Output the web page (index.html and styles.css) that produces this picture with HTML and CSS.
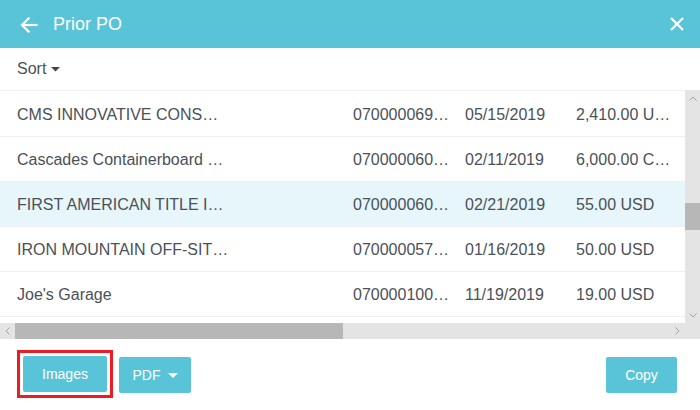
FILE: index.html
```
<!DOCTYPE html>
<html lang="en">
<head>
<meta charset="utf-8">
<title>Prior PO</title>
<link rel="stylesheet" href="styles.css">
</head>
<body>
<div class="app">
  <header class="topbar">
    <svg class="icon-back" width="18" height="16" viewBox="0 0 18 16" aria-hidden="true">
      <path d="M2 8H17.5" fill="none" stroke="#fff" stroke-width="2.2"/>
      <path d="M8.6 1.4L2 8l6.6 6.6" fill="none" stroke="#fff" stroke-width="2.2" stroke-linecap="square"/>
    </svg>
    <h1 class="title">Prior PO</h1>
    <svg class="icon-close" width="14" height="14" viewBox="0 0 14 14" aria-hidden="true">
      <path d="M1 1L13 13M13 1L1 13" fill="none" stroke="#fff" stroke-width="2.2"/>
    </svg>
  </header>

  <div class="sortbar">
    <span class="sort-label">Sort</span>
    <svg class="sort-caret" width="9" height="5" viewBox="0 0 9 5" aria-hidden="true"><path d="M0 0h9L4.5 4.5z" fill="#3f464c"/></svg>
  </div>

  <div class="scroller">
    <div class="list">
      <div class="row"><span>CMS INNOVATIVE CONS…</span><span>070000069…</span><span>05/15/2019</span><span>2,410.00 U…</span></div>
      <div class="row"><span>Cascades Containerboard …</span><span>070000060…</span><span>02/11/2019</span><span>6,000.00 C…</span></div>
      <div class="row is-selected"><span>FIRST AMERICAN TITLE I…</span><span>070000060…</span><span>02/21/2019</span><span>55.00 USD</span></div>
      <div class="row"><span>IRON MOUNTAIN OFF-SIT…</span><span>070000057…</span><span>01/16/2019</span><span>50.00 USD</span></div>
      <div class="row"><span>Joe's Garage</span><span>070000100…</span><span>11/19/2019</span><span>19.00 USD</span></div>
    </div>

    <div class="vbar">
      <div class="sb-btn"><svg width="8" height="5" viewBox="0 0 8 5"><path d="M0.5 4.5L4 1l3.5 3.5" fill="none" stroke="#a2a2a2" stroke-width="1"/></svg></div>
      <div class="vtrack"><div class="vthumb"></div></div>
      <div class="sb-btn"><svg width="8" height="5" viewBox="0 0 8 5"><path d="M0.5 0.5L4 4l3.5-3.5" fill="none" stroke="#a2a2a2" stroke-width="1"/></svg></div>
    </div>

    <div class="hbar">
      <div class="sb-btn"><svg width="5" height="8" viewBox="0 0 5 8"><path d="M4.5 0.5L1 4l3.5 3.5" fill="none" stroke="#a2a2a2" stroke-width="1"/></svg></div>
      <div class="hthumb"></div>
      <div class="htrack"></div>
      <div class="sb-btn"><svg width="5" height="8" viewBox="0 0 5 8"><path d="M0.5 0.5L4 4 0.5 7.5" fill="none" stroke="#a2a2a2" stroke-width="1"/></svg></div>
    </div>

    <div class="corner"></div>
  </div>

  <footer class="actions">
    <span class="focus-ring"><button class="btn btn-images">Images</button></span>
    <button class="btn btn-pdf">PDF<svg class="btn-caret" width="10" height="5" viewBox="0 0 10 5" aria-hidden="true"><path d="M0 0h10L5 5z" fill="#fff"/></svg></button>
    <span class="spacer"></span>
    <button class="btn btn-copy">Copy</button>
  </footer>
</div>
</body>
</html>
```

FILE: styles.css
```
* { box-sizing: border-box; }

html, body {
  margin: 0;
  padding: 0;
  background: #fff;
}

body {
  font-family: "Liberation Sans", Arial, sans-serif;
  color: #4b5157;
}

.app {
  width: 700px;
  height: 410px;
  display: flex;
  flex-direction: column;
  overflow: hidden;
}

/* Header */
.topbar {
  height: 48px;
  flex: none;
  background: #59c4d8;
  display: flex;
  align-items: center;
  padding: 0 16px 0 20px;
}

.icon-back {
  display: block;
  margin-right: 15px;
  margin-top: 1px;
}

.title {
  margin: 0;
  font-size: 18px;
  font-weight: normal;
  color: #fff;
  flex: 1;
}

.icon-close {
  display: block;
}

/* Sort bar */
.sortbar {
  height: 42px;
  flex: none;
  display: flex;
  align-items: center;
  padding-left: 17px;
  font-size: 16px;
  color: #4b5157;
}

.sort-caret {
  display: block;
  margin-left: 5px;
  margin-top: 1px;
}

/* Scroll area */
.scroller {
  flex: none;
  height: 249px;
  display: grid;
  grid-template-columns: 685px 15px;
  grid-template-rows: 233px 16px;
}

.list {
  overflow: hidden;
  border-top: 1px solid #eef0f1;
  padding-top: 1px;
}

.row {
  height: 45px;
  display: grid;
  grid-template-columns: 336px 112px 111px 1fr;
  align-items: center;
  padding-left: 17px;
  padding-top: 1px;
  border-bottom: 1px solid #eef0f1;
  font-size: 16px;
  white-space: nowrap;
  color: #4b5157;
}

.row.is-selected {
  background: #e6f6fa;
}

.row > span {
  overflow: hidden;
}

/* Scrollbars */
.vbar {
  background: #e4e4e4;
  display: flex;
  flex-direction: column;
}

.sb-btn {
  flex: none;
  width: 15px;
  height: 16px;
  display: flex;
  align-items: center;
  justify-content: center;
}

.sb-btn svg { display: block; }

.vtrack {
  flex: 1;
}

.vthumb {
  margin-top: 97px;
  height: 27px;
  background: #b7b7b7;
}

.hbar {
  background: #e4e4e4;
  display: flex;
}

.hbar .sb-btn {
  height: 16px;
}

.hthumb {
  width: 328px;
  background: #b7b7b7;
}

.htrack {
  flex: 1;
}

.corner {
  background: #e4e4e4;
}

/* Footer actions */
.actions {
  flex: 1;
  display: flex;
  align-items: flex-start;
  gap: 6px;
  padding: 11px 23px 0 17px;
}

.spacer {
  flex: 1;
}

.focus-ring {
  display: block;
  border: 3px solid #ec1c24;
  padding: 3px;
}

.btn {
  height: 36px;
  border: none;
  border-radius: 2px;
  background: #59c4d8;
  color: #fff;
  font-family: "Liberation Sans", Arial, sans-serif;
  font-size: 14px;
  padding: 0;
  display: flex;
  align-items: center;
  justify-content: center;
}

.btn-images {
  width: 84px;
}

.btn-pdf {
  width: 72px;
  margin-top: 7px;
}

.btn-caret {
  display: block;
  margin-left: 7px;
}

.btn-copy {
  width: 71px;
  margin-top: 7px;
}
```
